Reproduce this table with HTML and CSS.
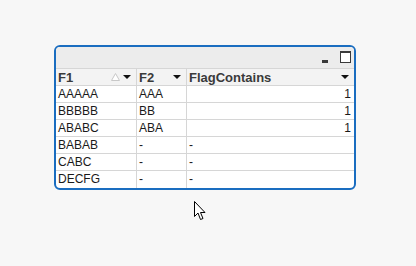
FILE: index.html
```html
<!DOCTYPE html>
<html lang="en">
<head>
  <meta charset="UTF-8" />
  <title>Table Box</title>
  <link rel="stylesheet" href="styles.css">
</head>
<body>
  <div class="tablebox">
    <div class="caption">
      <span class="btn-min"></span>
      <span class="btn-max"></span>
    </div>

    <div class="grid">
      <div class="cell head">F1
        <svg class="sort-hint" width="9" height="8" viewBox="0 0 9 8">
          <path d="M0.5 7.5 L4.5 0.5 L8.5 7.5 Z" fill="#fff" stroke="#c8c8c8" stroke-width="1"/>
        </svg>
        <span class="drop"></span>
      </div>
      <div class="cell head">F2<span class="drop"></span></div>
      <div class="cell head last">FlagContains<span class="drop"></span></div>

      <div class="cell">AAAAA</div>
      <div class="cell">AAA</div>
      <div class="cell last num">1</div>

      <div class="cell">BBBBB</div>
      <div class="cell">BB</div>
      <div class="cell last num">1</div>

      <div class="cell">ABABC</div>
      <div class="cell">ABA</div>
      <div class="cell last num">1</div>

      <div class="cell">BABAB</div>
      <div class="cell">-</div>
      <div class="cell last">-</div>

      <div class="cell">CABC</div>
      <div class="cell">-</div>
      <div class="cell last">-</div>

      <div class="cell end">DECFG</div>
      <div class="cell end">-</div>
      <div class="cell last end">-</div>
    </div>
  </div>

  <!-- mouse pointer -->
  <svg class="pointer" width="13" height="20" viewBox="0 0 13 20">
    <path d="M0.5 0.5 L0.5 15.5 L4 12 L6.5 18.5 L9 17.5 L6.5 11.5 L11 11.5 Z" fill="#fff" stroke="#000" stroke-width="1"/>
  </svg>
</body>
</html>
```

FILE: styles.css
```css
:root {
  --page-bg: #f7f7f7;
  --frame: #1a6dc0;
  --caption-bg: #ececec;
  --head-bg: #f3f3f3;
  --line: #d6d6d6;
  --text: #1a1a1a;
}

* {
  margin: 0;
  padding: 0;
  box-sizing: border-box;
}

body {
  background: var(--page-bg);
  font-family: 'Liberation Sans', sans-serif;
  color: var(--text);
  min-height: 266px;
  padding: 45px 0 0 54px;
  position: relative;
}

.tablebox {
  width: 302px;
  border: 2px solid var(--frame);
  border-radius: 6px;
  background: #fff;
  overflow: hidden;
}

.caption {
  height: 22px;
  background: var(--caption-bg);
  border-bottom: 1px solid var(--line);
  display: flex;
  align-items: flex-start;
  justify-content: flex-end;
  padding: 4px 3px 0 0;
  gap: 12px;
}

.btn-min {
  width: 6px;
  height: 3px;
  background: #3a3a3a;
  margin-top: 9px;
}

.btn-max {
  width: 11px;
  height: 12px;
  border: 1px solid #3a3a3a;
  border-top-width: 2px;
  background: #fff;
}

.grid {
  display: grid;
  grid-template-columns: 81px 50px 1fr;
}

.cell {
  height: 17px;
  border-right: 1px solid var(--line);
  border-bottom: 1px solid var(--line);
  font-size: 12px;
  line-height: 17px;
  padding: 0 2px;
  white-space: nowrap;
  overflow: hidden;
}

.cell.last {
  border-right: none;
}

.cell.end {
  border-bottom: none;
}

.cell.num {
  text-align: right;
  padding-right: 3px;
}

.head {
  background: var(--head-bg);
  font-weight: bold;
  font-size: 13px;
  color: #3a3a3a;
  display: flex;
  align-items: center;
  padding-right: 5px;
}

.drop {
  margin-left: auto;
  width: 0;
  height: 0;
  border-left: 4px solid transparent;
  border-right: 4px solid transparent;
  border-top: 4px solid #111;
}

.sort-hint {
  margin-left: auto;
  margin-top: -1px;
}

.sort-hint + .drop {
  margin-left: 3px;
}

.pointer {
  position: absolute;
  left: 194px;
  top: 201px;
}
```
